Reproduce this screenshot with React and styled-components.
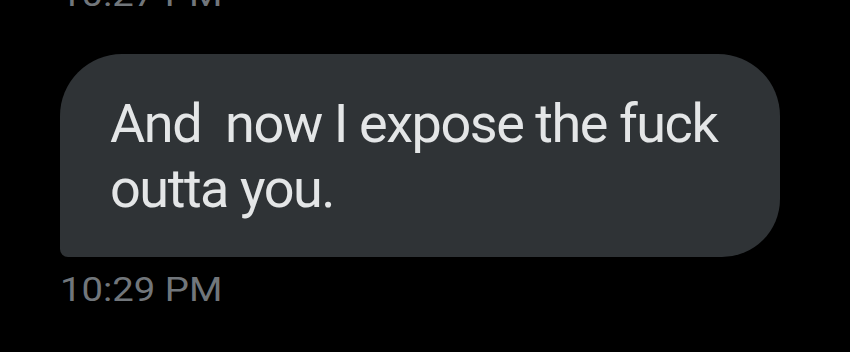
import React from "react";
import styled, { createGlobalStyle } from "styled-components";

const Global = createGlobalStyle`
  html, body { margin: 0; padding: 0; background: #000; }
  body { font-family: Roboto, "Noto Sans", sans-serif; -webkit-font-smoothing: antialiased; }
`;

const Page = styled.div`
  width: 850px;
  height: 352px;
  overflow: hidden;
  background: #000;
  padding-left: 60px;
  box-sizing: border-box;
  display: flex;
  flex-direction: column;
  align-items: flex-start;
`;

const Time = styled.div`
  font-size: 33px;
  line-height: 40px;
  color: #71767b;
  margin-top: ${(p) => p.$top || 0}px;
  transform: scaleX(1.16);
  transform-origin: left center;
  white-space: nowrap;
`;

const Bubble = styled.div`
  box-sizing: border-box;
  width: 720px;
  margin-top: 38.6px;
  padding: 36.75px 30px 36.55px 50px;
  background: #2f3336;
  border-radius: 62px 62px 58px 8px;
`;

const Text = styled.div`
  font-size: 54px;
  line-height: 65px;
  color: #e4e6e7;
  white-space: pre-wrap;
  letter-spacing: -1.45px;
`;

export default function App() {
  return (
    <>
      <Global />
      <Page>
        <Time $top={-24.6}>10:27 PM</Time>
        <Bubble>
          <Text>{"And  now I expose the fuck outta you."}</Text>
        </Bubble>
        <Time $top={12.7}>10:29 PM</Time>
      </Page>
    </>
  );
}
